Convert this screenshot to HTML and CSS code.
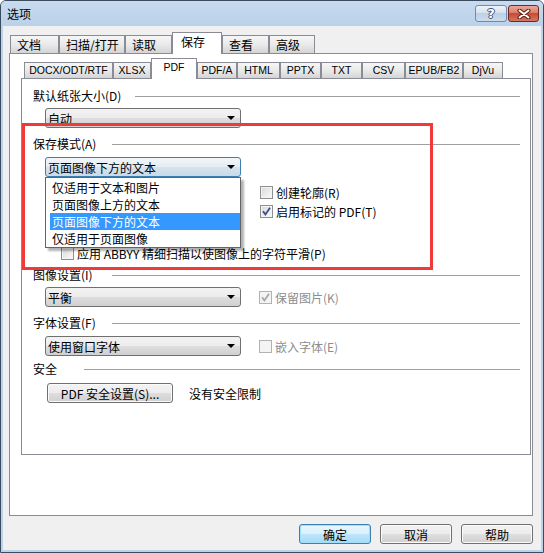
FILE: index.html
```html
<!DOCTYPE html>
<html lang="zh-CN">
<head>
    <meta charset="UTF-8">
    <title>选项</title>
    <link rel="stylesheet" href="styles.css">
</head>
<body>
    <div class="window">
        <div class="titlebar">
            <div class="title">选项</div>
            <div class="caption-buttons">
                <div class="cap-btn help">?</div>
                <div class="cap-btn close">
                    <svg width="14" height="10" viewBox="0 0 14 10">
                        <path d="M2.5 1.5 L11.5 8.5 M11.5 1.5 L2.5 8.5" stroke="#5b1e15" stroke-width="4" stroke-linecap="round"/>
                        <path d="M2.5 1.5 L11.5 8.5 M11.5 1.5 L2.5 8.5" stroke="#fff" stroke-width="2" stroke-linecap="round"/>
                    </svg>
                </div>
            </div>
        </div>

        <div class="client">
            <div class="tabs outer-tabs">
                <div class="tab">文档</div>
                <div class="tab">扫描/打开</div>
                <div class="tab">读取</div>
                <div class="tab active">保存</div>
                <div class="tab">查看</div>
                <div class="tab">高级</div>
            </div>

            <div class="panel outer-panel">
                <div class="tabs inner-tabs">
                    <div class="tab">DOCX/ODT/RTF</div>
                    <div class="tab">XLSX</div>
                    <div class="tab active">PDF</div>
                    <div class="tab">PDF/A</div>
                    <div class="tab">HTML</div>
                    <div class="tab">PPTX</div>
                    <div class="tab">TXT</div>
                    <div class="tab">CSV</div>
                    <div class="tab">EPUB/FB2</div>
                    <div class="tab">DjVu</div>
                </div>

                <div class="panel inner-panel">
                    <div class="group-head">
                        <span class="label wide">默认纸张大小(D)</span><i class="sep"></i>
                    </div>
                    <div class="row">
                        <div class="combo">自动<span class="arrow"></span></div>
                    </div>

                    <div class="group-head gap-large">
                        <span class="label">保存模式(A)</span><i class="sep"></i>
                    </div>
                    <div class="row">
                        <div class="combo open">页面图像下方的文本<span class="arrow"></span>
                            <ul class="dropdown">
                                <li>仅适用于文本和图片</li>
                                <li>页面图像上方的文本</li>
                                <li class="selected">页面图像下方的文本</li>
                                <li>仅适用于页面图像</li>
                            </ul>
                        </div>
                    </div>
                    <div class="side-checks">
                        <label class="check"><span class="box"></span>创建轮廓(R)</label>
                        <label class="check checked"><span class="box"><svg width="11" height="11" viewBox="0 0 11 11"><path d="M2 5.2 L4.4 8.4 L9 1.8" fill="none" stroke="currentColor" stroke-width="1.8"/></svg></span>启用标记的 PDF(T)</label>
                    </div>
                    <label class="check indent"><span class="box"></span>应用 ABBYY 精细扫描以使图像上的字符平滑(P)</label>

                    <div class="group-head gap-small">
                        <span class="label">图像设置(I)</span><i class="sep"></i>
                    </div>
                    <div class="row">
                        <div class="combo">平衡<span class="arrow"></span></div>
                        <label class="check checked disabled"><span class="box"><svg width="11" height="11" viewBox="0 0 11 11"><path d="M2 5.2 L4.4 8.4 L9 1.8" fill="none" stroke="currentColor" stroke-width="1.8"/></svg></span>保留图片(K)</label>
                    </div>

                    <div class="group-head gap-large">
                        <span class="label">字体设置(F)</span><i class="sep"></i>
                    </div>
                    <div class="row">
                        <div class="combo">使用窗口字体<span class="arrow"></span></div>
                        <label class="check disabled"><span class="box"></span>嵌入字体(E)</label>
                    </div>

                    <div class="group-head gap-small">
                        <span class="label narrow">安全</span><i class="sep"></i>
                    </div>
                    <div class="row security">
                        <div class="button">PDF 安全设置(S)...</div>
                        <span class="note">没有安全限制</span>
                    </div>

                    <div class="marker"></div>
                </div>
            </div>

            <div class="footer">
                <div class="button default">确定</div>
                <div class="button">取消</div>
                <div class="button">帮助</div>
            </div>
        </div>
    </div>
</body>
</html>
```

FILE: styles.css
```css
* {
    box-sizing: border-box;
}

body {
    margin: 0;
    font-family: "Noto Sans CJK SC", "Liberation Sans", sans-serif;
    font-size: 12px;
    color: #000;
    background: #fff;
}

.window {
    width: 544px;
    height: 553px;
    border: 1px solid #3a4b5e;
    border-radius: 6px 6px 0 0;
    background: #bcd3eb;
    display: flex;
    flex-direction: column;
    overflow: hidden;
}

/* barre de titre */
.titlebar {
    height: 25px;
    flex: none;
    display: flex;
    justify-content: space-between;
    padding: 0 4px 0 6px;
    background: linear-gradient(to bottom, #c8dbef, #b9d1ea);
}

.title {
    line-height: 25px;
}

.caption-buttons {
    display: flex;
    gap: 1px;
    padding-top: 4px;
}

.cap-btn {
    width: 32px;
    height: 17px;
    border-radius: 3px;
    display: flex;
    justify-content: center;
    align-items: center;
}

.cap-btn.help {
    border: 1px solid #6f8bab;
    background: linear-gradient(to bottom, #edf3f9, #d5e2ef 45%, #bdd0e5 50%, #cddcec);
    color: #fff;
    font-family: "DejaVu Sans", sans-serif;
    font-weight: bold;
    font-size: 13px;
    text-shadow: -1px 0 #3d556f, 1px 0 #3d556f, 0 -1px #3d556f, 0 1px #3d556f;
}

.cap-btn.close {
    width: 31px;
    border: 1px solid #6e2a20;
    background: linear-gradient(to bottom, #eca898, #dc7d69 45%, #c84b33 50%, #d6775f);
}

/* zone client */
.client {
    flex: 1;
    margin: 0 2px 2px;
    padding: 6px 8px 0 6px;
    background: #f0f0f0;
}

.tabs {
    display: flex;
    align-items: flex-end;
    position: relative;
    z-index: 1;
}

.tab {
    flex: none;
    border: 1px solid #898c95;
    border-bottom: none;
    background: linear-gradient(to bottom, #f6f6f6, #e8e8e8 55%, #d4d4d4);
    white-space: nowrap;
}

.tab.active {
    background: #fff;
    margin-bottom: -1px;
}

.outer-tabs {
    height: 21px;
    padding-left: 1px;
}

.outer-tabs .tab {
    height: 18px;
    line-height: 17px;
    padding-left: 6px;
}

.outer-tabs .tab.active {
    height: 22px;
    line-height: 18px;
    padding-left: 8px;
}

.outer-tabs .tab:nth-child(1) { width: 49px; }
.outer-tabs .tab:nth-child(2) { width: 66px; }
.outer-tabs .tab:nth-child(3) { width: 47px; }
.outer-tabs .tab:nth-child(4) { width: 50px; }
.outer-tabs .tab:nth-child(5) { width: 47px; }
.outer-tabs .tab:nth-child(6) { width: 46px; }

.inner-tabs {
    height: 20px;
    padding-left: 3px;
}

.inner-tabs .tab {
    height: 16px;
    line-height: 15px;
    font-family: "Liberation Sans", sans-serif;
    font-size: 10.5px;
    text-align: center;
}

.inner-tabs .tab.active {
    height: 21px;
    line-height: 16px;
}

.inner-tabs .tab:nth-child(1) { width: 89px; }
.inner-tabs .tab:nth-child(2) { width: 38px; }
.inner-tabs .tab:nth-child(3) { width: 46px; }
.inner-tabs .tab:nth-child(4) { width: 40px; }
.inner-tabs .tab:nth-child(5) { width: 43px; }
.inner-tabs .tab:nth-child(6) { width: 41px; }
.inner-tabs .tab:nth-child(7) { width: 41px; }
.inner-tabs .tab:nth-child(8) { width: 43px; }
.inner-tabs .tab:nth-child(9) { width: 58px; }
.inner-tabs .tab:nth-child(10) { width: 40px; }

.panel {
    border: 1px solid #898c95;
    background: #fff;
}

.outer-panel {
    height: 463px;
    padding: 4px 1px 0 11px;
}

.inner-panel {
    height: 377px;
    padding: 10px 10px 0 11px;
    position: relative;
}

/* groupes */
.group-head {
    display: flex;
    height: 14px;
    line-height: 14px;
}

.group-head .label {
    width: 79px;
    flex: none;
}

.group-head .label.wide { width: 102px; }
.group-head .label.narrow { width: 51px; }

.group-head .sep {
    flex: 1;
    height: 1px;
    margin-top: 7px;
    background: #a0a0a0;
}

.gap-large { margin-top: 9px; }
.gap-small { margin-top: 6px; }

.row {
    display: flex;
    align-items: center;
    margin-top: 5px;
    padding-left: 12px;
}

.gap-large + .row { margin-top: 6px; }

.combo {
    width: 196px;
    height: 20px;
    flex: none;
    display: flex;
    justify-content: space-between;
    align-items: center;
    padding: 0 5px 0 2px;
    border: 1px solid #707070;
    border-radius: 3px;
    background: linear-gradient(to bottom, #f3f3f3, #ececec 50%, #dedede 50%, #d0d0d0);
    position: relative;
}

.combo.open {
    border-color: #3c7fb1;
    background: linear-gradient(to bottom, #f1f6fa, #e4edf4 50%, #d6e3ee 50%, #c9dae8);
}

.arrow {
    width: 0;
    height: 0;
    border-left: 4px solid transparent;
    border-right: 4px solid transparent;
    border-top: 4px solid #000;
}

.dropdown {
    position: absolute;
    left: -1px;
    top: 19px;
    width: 196px;
    margin: 0;
    padding: 1px 0 0 4px;
    list-style: none;
    background: #fff;
    border: 1px solid #646464;
    box-shadow: 3px 3px 2px rgba(0, 0, 0, 0.3);
    z-index: 2;
}

.dropdown li {
    height: 17px;
    line-height: 17px;
    padding-left: 2px;
}

.dropdown li.selected {
    background: #3399ff;
    color: #fff;
}

/* cases à cocher */
.check {
    display: flex;
    align-items: center;
    height: 17px;
}

.check .box {
    width: 13px;
    height: 13px;
    margin-right: 3px;
    border: 1px solid #8e8f8f;
    background: linear-gradient(135deg, #d8d8d8, #fbfbfb);
    box-shadow: inset 0 0 0 1px #f4f4f4;
    display: flex;
    justify-content: center;
    align-items: center;
    color: #3b4f8c;
}

.check.disabled {
    color: #8d8d8d;
}

.check.disabled .box {
    border-color: #b2b2b2;
    background: #f4f4f4;
    color: #a8a8a8;
}

.row .check {
    margin-left: 18px;
}

.side-checks {
    margin: 7px 0 0 227px;
    display: flex;
    flex-direction: column;
    gap: 2px;
}

.check.indent {
    margin: 25px 0 0 28px;
}

.check.indent + .group-head {
    margin-top: 6px;
}

/* boutons */
.button {
    height: 20px;
    display: flex;
    justify-content: center;
    align-items: center;
    border: 1px solid #707070;
    border-radius: 3px;
    background: linear-gradient(to bottom, #f3f3f3, #ececec 50%, #dedede 50%, #d0d0d0);
    box-shadow: inset 0 0 0 1px #fbfbfb;
}

.button.default {
    border-color: #3c7fb1;
    background: linear-gradient(to bottom, #eaf6fd, #d9f0fc 50%, #bee6fd 50%, #a7d9f5);
    box-shadow: inset 0 0 0 1px #9ee0fb;
}

.security {
    margin-top: 7px;
    padding-left: 14px;
}

.security .button {
    width: 126px;
}

.security .note {
    margin-left: 16px;
}

.footer {
    display: flex;
    justify-content: flex-end;
    gap: 9px;
    margin-top: 8px;
}

.footer .button {
    width: 72px;
}

/* cadre rouge d'annotation */
.marker {
    position: absolute;
    left: 0;
    top: 44px;
    width: 411px;
    height: 147px;
    border: 3px solid #f03a3a;
    pointer-events: none;
}
```
